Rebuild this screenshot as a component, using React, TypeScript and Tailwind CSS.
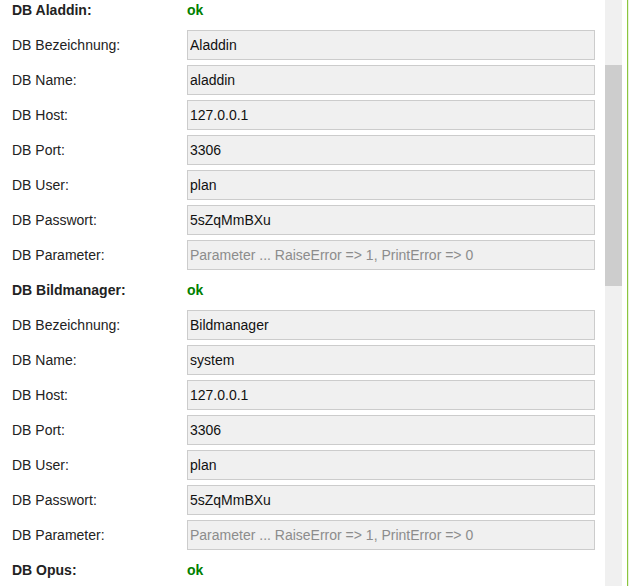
import React from "react";

type Db = {
  title: string;
  fields: { label: string; value?: string; placeholder?: string }[];
};

const dbs: Db[] = [
  {
    title: "DB Aladdin:",
    fields: [
      { label: "DB Bezeichnung:", value: "Aladdin" },
      { label: "DB Name:", value: "aladdin" },
      { label: "DB Host:", value: "127.0.0.1" },
      { label: "DB Port:", value: "3306" },
      { label: "DB User:", value: "plan" },
      { label: "DB Passwort:", value: "5sZqMmBXu" },
      { label: "DB Parameter:", placeholder: "Parameter ... RaiseError => 1, PrintError => 0" },
    ],
  },
  {
    title: "DB Bildmanager:",
    fields: [
      { label: "DB Bezeichnung:", value: "Bildmanager" },
      { label: "DB Name:", value: "system" },
      { label: "DB Host:", value: "127.0.0.1" },
      { label: "DB Port:", value: "3306" },
      { label: "DB User:", value: "plan" },
      { label: "DB Passwort:", value: "5sZqMmBXu" },
      { label: "DB Parameter:", placeholder: "Parameter ... RaiseError => 1, PrintError => 0" },
    ],
  },
  {
    title: "DB Opus:",
    fields: [],
  },
];

export default function App() {
  return (
    <div
      className="flex h-[586px] w-[629px] overflow-hidden bg-white text-[14px] text-[#222]"
      style={{ fontFamily: '"Liberation Sans", Arial, sans-serif' }}
    >
      <div className="w-[605px] shrink-0 overflow-hidden">
        <div className="-mt-[5px] flex flex-col gap-[5px] pl-[12px]">
          {dbs.map((db) => (
            <React.Fragment key={db.title}>
              <div className="flex h-[30px] items-center">
                <div className="w-[175px] shrink-0 font-bold">{db.title}</div>
                <div className="font-bold text-[#008000]">ok</div>
              </div>
              {db.fields.map((f, i) => (
                <div key={i} className="flex h-[30px] items-center">
                  <div className="w-[175px] shrink-0">{f.label}</div>
                  <input
                    readOnly
                    defaultValue={f.value}
                    placeholder={f.placeholder}
                    className="h-[30px] w-[408px] border border-[#cccccc] bg-[#f0f0f0] px-[2px] text-[14px] text-[#111] outline-none placeholder:text-[#8c8c8c]"
                    style={{ fontFamily: '"Liberation Sans", Arial, sans-serif' }}
                  />
                </div>
              ))}
            </React.Fragment>
          ))}
        </div>
      </div>
      <div className="flex h-full w-[17px] shrink-0 flex-col bg-[#f0f0f0]">
        <div className="h-[65px]" />
        <div className="h-[221px] bg-[#cdcdcd]" />
      </div>
      <div className="w-[5px] shrink-0" />
      <div className="h-full w-px shrink-0 bg-[#8cc63f]" />
      <div className="h-full w-px shrink-0 bg-[#e8f2dc]" />
    </div>
  );
}
